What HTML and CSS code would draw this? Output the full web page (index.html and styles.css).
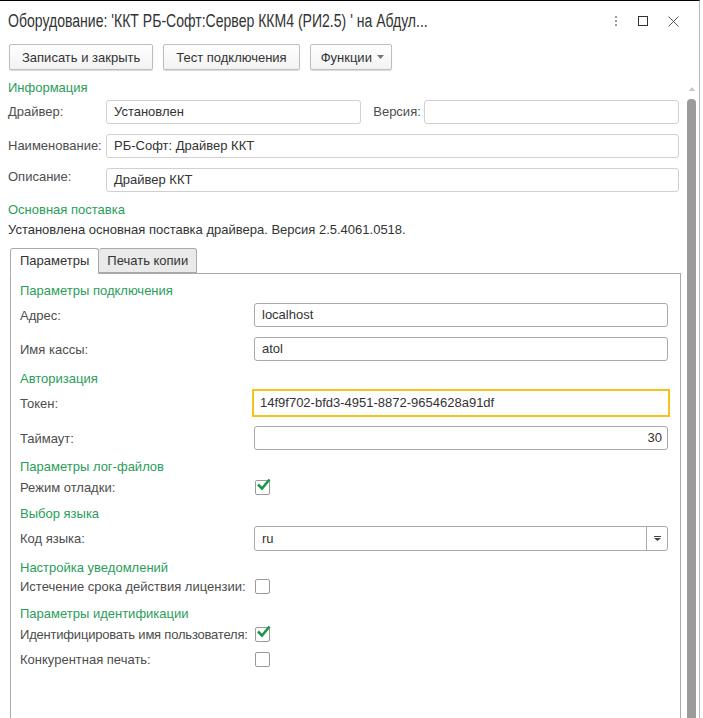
FILE: index.html
```html
<!DOCTYPE html>
<html lang="ru">

<head>
    <meta charset="UTF-8">
    <title>Оборудование</title>
    <link rel="stylesheet" href="styles.css">
</head>

<body>
    <div class="window">
        <!-- Title bar -->
        <div class="titlebar">
            <h1 class="title">Оборудование: 'ККТ РБ-Софт:Сервер ККМ4 (РИ2.5) ' на Абдул...</h1>
            <div class="win-ctrl">
                <svg width="4" height="10" viewBox="0 0 4 10">
                    <rect x="1" y="0" width="2" height="2" fill="#9a9a9a"/>
                    <rect x="1" y="4" width="2" height="2" fill="#9a9a9a"/>
                    <rect x="1" y="8" width="2" height="2" fill="#9a9a9a"/>
                </svg>
                <svg width="10" height="10" viewBox="0 0 10 10">
                    <rect x="0.5" y="0.5" width="9" height="9" fill="none" stroke="#333" stroke-width="1"/>
                </svg>
                <svg width="11" height="11" viewBox="0 0 11 11">
                    <path d="M0.5 0.5 L10.5 10.5 M10.5 0.5 L0.5 10.5" stroke="#555" stroke-width="1" fill="none"/>
                </svg>
            </div>
        </div>

        <!-- Command bar -->
        <div class="toolbar">
            <button class="btn">Записать и закрыть</button>
            <button class="btn">Тест подключения</button>
            <button class="btn btn-menu">Функции
                <svg width="7" height="4" viewBox="0 0 7 4"><path d="M0 0 H7 L3.5 4 Z" fill="#777"/></svg>
            </button>
        </div>

        <div class="content">
            <div class="form">
                <div class="group-title">Информация</div>
                <div class="row">
                    <span class="label">Драйвер:</span>
                    <div class="field field-light grow">Установлен</div>
                    <span class="label label-ver">Версия:</span>
                    <div class="field field-light grow"></div>
                </div>
                <div class="row">
                    <span class="label">Наименование:</span>
                    <div class="field field-light grow">РБ-Софт: Драйвер ККТ</div>
                </div>
                <div class="row row-top">
                    <span class="label">Описание:</span>
                    <div class="field field-light grow">Драйвер ККТ</div>
                </div>

                <div class="group-title">Основная поставка</div>
                <div class="note">Установлена основная поставка драйвера. Версия 2.5.4061.0518.</div>

                <!-- Tabs -->
                <div class="tabs">
                    <div class="tab active">Параметры</div>
                    <div class="tab">Печать копии</div>
                </div>
                <div class="tab-panel">
                    <div class="group-title">Параметры подключения</div>
                    <div class="prow">
                        <span class="label">Адрес:</span>
                        <div class="field">localhost</div>
                    </div>
                    <div class="prow">
                        <span class="label">Имя кассы:</span>
                        <div class="field">atol</div>
                    </div>

                    <div class="group-title gap-wide">Авторизация</div>
                    <div class="prow">
                        <span class="label">Токен:</span>
                        <div class="field field-focus">14f9f702-bfd3-4951-8872-9654628a91df</div>
                    </div>
                    <div class="prow prow-after-focus">
                        <span class="label">Таймаут:</span>
                        <div class="field field-num">30</div>
                    </div>

                    <div class="group-title">Параметры лог-файлов</div>
                    <div class="prow check-row">
                        <span class="label">Режим отладки:</span>
                        <span class="checkbox checked">
                            <svg width="15" height="13" viewBox="0 0 15 13"><path d="M2 6.5 L6 10.5 L13.5 1.5" stroke="#17994a" stroke-width="2.6" fill="none"/></svg>
                        </span>
                    </div>

                    <div class="group-title gap-wide">Выбор языка</div>
                    <div class="prow">
                        <span class="label">Код языка:</span>
                        <div class="field combo">
                            <span class="combo-text">ru</span>
                            <span class="combo-btn">
                                <svg width="7" height="5" viewBox="0 0 7 5"><rect x="0" y="0" width="7" height="1" fill="#444"/><path d="M0 2 H7 L3.5 5 Z" fill="#444"/></svg>
                            </span>
                        </div>
                    </div>

                    <div class="group-title">Настройка уведомлений</div>
                    <div class="prow check-row check-close">
                        <span class="label">Истечение срока действия лицензии:</span>
                        <span class="checkbox"></span>
                    </div>

                    <div class="group-title gap-xwide">Параметры идентификации</div>
                    <div class="prow check-row">
                        <span class="label label-tight">Идентифицировать имя пользователя:</span>
                        <span class="checkbox checked">
                            <svg width="15" height="13" viewBox="0 0 15 13"><path d="M2 6.5 L6 10.5 L13.5 1.5" stroke="#17994a" stroke-width="2.6" fill="none"/></svg>
                        </span>
                    </div>
                    <div class="prow check-row check-last">
                        <span class="label">Конкурентная печать:</span>
                        <span class="checkbox"></span>
                    </div>
                </div>
            </div>

            <!-- Vertical scrollbar -->
            <div class="scrollbar">
                <svg class="scroll-up" width="6" height="4" viewBox="0 0 6 4"><path d="M0 4 L3 0 L6 4 Z" fill="#c4c4c4"/></svg>
                <div class="scroll-thumb"></div>
            </div>
        </div>
    </div>
</body>

</html>
```

FILE: styles.css
```css
/* Reset */
* {
    margin: 0;
    padding: 0;
    box-sizing: border-box;
}

body {
    font-family: "Liberation Sans", Arial, sans-serif;
    font-size: 13px;
    color: #4d4d4d;
    background: #fff;
    overflow: hidden;
}

/* Window frame */
.window {
    width: 700px;
    height: 718px;
    border-top: 1px solid #000;
    border-right: 1px solid #b8b8b8;
    display: flex;
    flex-direction: column;
    overflow: hidden;
}

/* Title bar */
.titlebar {
    height: 36px;
    padding: 8px 0 0 8px;
    display: flex;
    justify-content: space-between;
}

/* the caption font is a narrow one, squeeze the regular face */
.title {
    font-size: 18px;
    font-weight: normal;
    color: #333;
    line-height: 24px;
    white-space: nowrap;
    transform: scaleX(0.78);
    transform-origin: left center;
}

.win-ctrl {
    display: flex;
    align-items: center;
    gap: 20px;
    height: 24px;
    padding-right: 20px;
}

/* Command bar */
.toolbar {
    display: flex;
    padding: 7px 0 0 9px;
    gap: 10px;
}

.btn {
    font-family: inherit;
    font-size: 13px;
    color: #333;
    height: 26px;
    padding: 0 12px;
    background: linear-gradient(#fff, #f2f2f2);
    border: 1px solid #bdbdbd;
    border-radius: 2px;
    box-shadow: 0 1px 1px rgba(0, 0, 0, 0.15);
    white-space: nowrap;
}

.btn-menu {
    display: flex;
    align-items: center;
    gap: 5px;
    padding: 0 7px 0 10px;
}

/* Body with scrollbar */
.content {
    flex: 1;
    display: flex;
    min-height: 0;
}

.form {
    flex: 1;
    padding: 10px 7px 0 8px;
    min-width: 0;
}

.label {
    white-space: nowrap;
}

.label-tight {
    letter-spacing: -0.2px;
}

.group-title {
    color: #2a9d5a;
    line-height: 16px;
}

.row {
    display: flex;
    align-items: center;
    margin-top: 10px;
}

.group-title + .row {
    margin-top: 4px;
}

.row-top {
    align-items: flex-start;
}

.row-top .label {
    padding-top: 1px;
}

.row .label {
    width: 98px;
    flex-shrink: 0;
    line-height: 16px;
}

.row .label-ver {
    width: auto;
    padding: 0 3px 0 12px;
}

.field {
    height: 24px;
    border: 1px solid #a9a9a9;
    border-radius: 3px;
    background: #fff;
    color: #333;
    padding: 0 7px;
    line-height: 22px;
    white-space: nowrap;
}

.field-light {
    border-color: #d0d0d0;
}

.grow {
    flex: 1;
}

.row + .group-title {
    margin-top: 10px;
}

.note {
    color: #333;
    line-height: 16px;
    margin-top: 4px;
}

/* Tabs */
.tabs {
    display: flex;
    margin-top: 10px;
    margin-left: 2px;
    height: 25px;
}

.tab {
    color: #333;
    padding: 0 9px;
    line-height: 24px;
    border: 1px solid #a9a9a9;
    border-radius: 3px 3px 0 0;
    background: #eaeaea;
}

.tab.active {
    background: #fff;
    border-bottom-color: #fff;
    height: 26px;
    position: relative;
    z-index: 1;
}

.tab + .tab {
    border-left: none;
    padding: 0 8px;
}

.tab-panel {
    margin-left: 2px;
    width: 671px;
    height: 460px;
    border: 1px solid #a9a9a9;
    padding: 9px 11px 0 9px;
}

.prow {
    display: grid;
    grid-template-columns: 234px 414px;
    align-items: center;
    margin-top: 10px;
}

.group-title + .prow {
    margin-top: 4px;
}

.prow + .group-title {
    margin-top: 9px;
}

.prow + .gap-wide {
    margin-top: 10px;
}

.prow + .gap-xwide {
    margin-top: 11px;
}

.prow-after-focus {
    margin-top: 11px;
}

.field-focus {
    height: 28px;
    margin: -2px;
    border: 2px solid #f3c31c;
    border-radius: 0;
    padding: 0 6px;
    line-height: 24px;
}

.field-num {
    text-align: right;
    padding-right: 5px;
}

.combo {
    height: 25px;
    display: flex;
    padding: 0;
}

.combo-text {
    flex: 1;
    padding: 0 7px;
    line-height: 23px;
}

.combo-btn {
    width: 21px;
    border-left: 1px solid #a9a9a9;
    display: flex;
    align-items: center;
    justify-content: center;
}

/* Checkboxes */
.check-row {
    height: 18px;
}

.group-title + .check-row {
    margin-top: 3px;
}

.group-title + .check-close {
    margin-top: 1px;
}

.check-last {
    margin-top: 7px;
}

.checkbox {
    width: 15px;
    height: 15px;
    margin-left: 1px;
    border: 1px solid #9a9a9a;
    border-radius: 2px;
    position: relative;
}

.checkbox svg {
    position: absolute;
    left: 0;
    top: -3px;
}

/* Scrollbar */
.scrollbar {
    width: 13px;
    display: flex;
    flex-direction: column;
    align-items: center;
    padding-top: 17px;
}

.scroll-up {
    margin-left: -2px;
}

.scroll-thumb {
    margin-top: 8px;
    margin-left: -2px;
    width: 9px;
    flex: 1;
    background: #9b9b9b;
    border-radius: 4px 4px 0 0;
}
```
